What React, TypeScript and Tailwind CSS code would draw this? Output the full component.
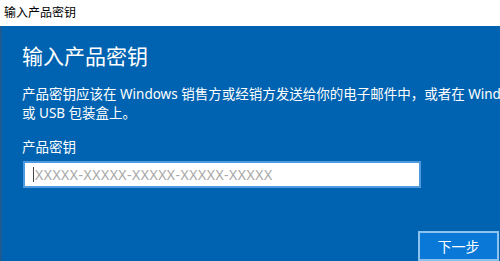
import React from "react";

const font = { fontFamily: '"Noto Sans", "Noto Sans CJK SC", sans-serif' };

export default function App() {
  return (
    <div
      className="w-[500px] h-[261px] overflow-hidden flex flex-col bg-[#0063b1]"
      style={font}
    >
      <div className="h-[26px] bg-white flex items-center pl-[4px] text-[12px] text-black shrink-0">
        输入产品密钥
      </div>
      <div className="flex-1 border-l-[2px] border-[#1d5b92] pl-[20px] flex flex-col text-white min-h-0">
        <div className="mt-[16px] text-[21px] leading-[28px]">输入产品密钥</div>
        <div className="mt-[15px] text-[13.5px] leading-[19px] whitespace-nowrap">
          <div>产品密钥应该在 Windows 销售方或经销方发送给你的电子邮件中，或者在 Windows DVD</div>
          <div>或 USB 包装盒上。</div>
        </div>
        <div className="mt-[15px] text-[13.5px] leading-[19px]">产品密钥</div>
        <div className="mt-[4px] w-[398px] h-[27px] ml-[1px] bg-white border-[2px] border-[#4c9be0] flex items-center pl-[8px] shrink-0">
          <div className="w-[1px] h-[15px] bg-[#444] mr-[1px]" />
          <span className="text-[14px] tracking-[0.5px] text-[#a8a8a8] leading-none">XXXXX-XXXXX-XXXXX-XXXXX-XXXXX</span>
        </div>
        <div className="flex justify-end mt-[43px] pr-[1px]">
          <div className="w-[81px] h-[30px] bg-[#0a78d6] border-[2px] border-[#8cc2ee] flex items-center justify-center text-[14px] text-white shrink-0">
            下一步
          </div>
        </div>
      </div>
    </div>
  );
}
